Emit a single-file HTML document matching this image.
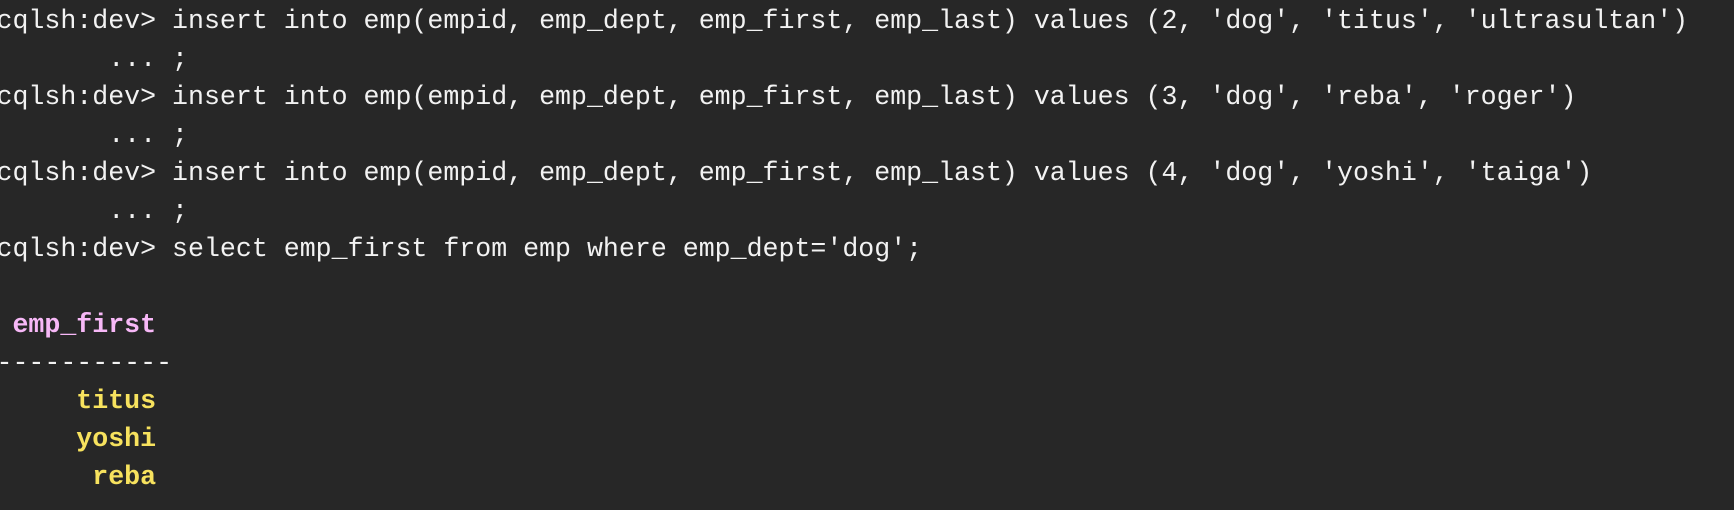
<!DOCTYPE html>
<html><head><style>
html,body{margin:0;padding:0;background:#272727;width:1734px;height:510px;overflow:hidden}
pre{margin:0;position:absolute;left:-3.5px;top:2px;font-family:"Liberation Mono",monospace;font-size:26.6px;line-height:38px;color:#f2f2f2;white-space:pre}
.p{color:#f7b8f7;font-weight:bold}
.y{color:#f7e25e;font-weight:bold}
</style></head><body>
<pre>cqlsh:dev&gt; insert into emp(empid, emp_dept, emp_first, emp_last) values (2, 'dog', 'titus', 'ultrasultan')
       ... ;
cqlsh:dev&gt; insert into emp(empid, emp_dept, emp_first, emp_last) values (3, 'dog', 'reba', 'roger')
       ... ;
cqlsh:dev&gt; insert into emp(empid, emp_dept, emp_first, emp_last) values (4, 'dog', 'yoshi', 'taiga')
       ... ;
cqlsh:dev&gt; select emp_first from emp where emp_dept='dog';

 <span class="p">emp_first</span>
-----------
     <span class="y">titus</span>
     <span class="y">yoshi</span>
      <span class="y">reba</span>
</pre>
</body></html>
